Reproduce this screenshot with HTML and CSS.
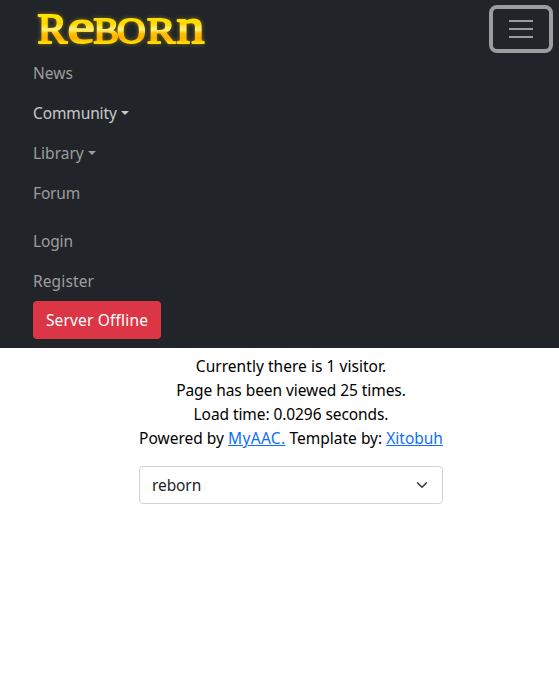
FILE: index.html
```html
<!DOCTYPE html>
<html lang="en">
<head>
<meta charset="utf-8">
<meta name="viewport" content="width=device-width, initial-scale=1">
<title>Reborn</title>
<link rel="stylesheet" href="styles.css">
</head>
<body>
<nav class="navbar">
  <div class="navbar-head">
    <a class="brand" href="#">
      <svg width="190" height="53" viewBox="28 0 190 53">
        <defs>
          <linearGradient id="gold" gradientUnits="userSpaceOnUse" x1="0" y1="-29" x2="0" y2="0">
            <stop offset="0" stop-color="#ffe600"/>
            <stop offset=".35" stop-color="#ffd800"/>
            <stop offset=".56" stop-color="#fff27a"/>
            <stop offset=".68" stop-color="#ffc400"/>
            <stop offset=".85" stop-color="#ffae00"/>
            <stop offset="1" stop-color="#ffdc00"/>
          </linearGradient>
        </defs>
        <g class="logo-text">
          <text transform="translate(37.5 42.5) scale(1.06 1)" font-size="42">R</text>
          <text transform="translate(67.5 42.5) scale(1.25 1)" font-size="49">e</text>
          <text transform="translate(93.5 42.5) scale(1.06 1)" font-size="36">B</text>
          <text transform="translate(117 42.5) scale(1.1 1)" font-size="36">O</text>
          <text transform="translate(147 42.5) scale(1.18 1)" font-size="36">R</text>
          <text transform="translate(176.5 42.5) scale(1.12 1)" font-size="50">n</text>
        </g>
      </svg>
    </a>
    <button class="toggler" aria-label="Toggle navigation">
      <svg width="30" height="30" viewBox="0 0 30 30"><path stroke="#9b9d9e" stroke-width="2" d="M3 7h24M3 15h24M3 23h24"/></svg>
    </button>
  </div>
  <ul class="nav">
    <li><a href="#">News</a></li>
    <li><a class="active caret" href="#">Community</a></li>
    <li><a class="caret" href="#">Library</a></li>
    <li><a class="forum" href="#">Forum</a></li>
  </ul>
  <ul class="nav account">
    <li><a class="login" href="#">Login</a></li>
    <li><a class="register" href="#">Register</a></li>
  </ul>
  <button class="status">Server Offline</button>
</nav>
<footer class="footer">
  <div class="visitors">Currently there is 1 visitor.</div>
  <div class="views">Page has been viewed 25 times.</div>
  <div class="load">Load time: 0.0296 seconds.</div>
  <div>Powered by <a class="aac" href="#">MyAAC.</a> Template by: <a href="#">Xitobuh</a></div>
  <div class="select"><span>reborn</span>
    <svg width="16" height="12" viewBox="0 0 16 16"><path fill="none" stroke="#343a40" stroke-linecap="round" stroke-linejoin="round" stroke-width="2" d="m2 5 6 6 6-6"/></svg>
  </div>
</footer>
</body>
</html>
```
FILE: styles.css
```css
* { box-sizing: border-box; }
body {
  margin: 0;
  background: #fff;
  color: #000;
  font: 15.5px/24px "Noto Sans", sans-serif;
}
.navbar {
  height: 348px;
  background: #212529;
}
.navbar-head {
  display: flex;
  justify-content: space-between;
  height: 53px;
  padding: 0 6px 0 28px;
}
.brand svg { display: block; overflow: visible; }
.logo-text {
  fill: url(#gold);
  stroke: url(#gold);
  stroke-width: 1.9px;
  stroke-linejoin: round;
  font-family: "Liberation Serif", serif;
  filter: drop-shadow(0 0 2px rgba(255, 200, 0, .45));
}
.toggler {
  display: flex;
  align-items: center;
  justify-content: center;
  width: 64px;
  height: 48px;
  margin-top: 5px;
  padding: 0;
  border: 4px solid #9b9d9e;
  border-radius: 8px;
  background: transparent;
}
.toggler svg { flex: none; }
.nav {
  margin: 0;
  padding: 0 33px;
  list-style: none;
}
.nav a {
  display: block;
  height: 40px;
  padding: 8px 0;
  color: #9b9d9e;
  text-decoration: none;
}
.nav a.active { color: #c8c9ca; letter-spacing: -.12px; }
.forum, .login { letter-spacing: -.15px; }
.register { letter-spacing: .12px; }
.caret::after {
  content: "";
  display: inline-block;
  margin-left: 4px;
  vertical-align: 4px;
  border: 4.5px solid transparent;
  border-top-color: currentColor;
  border-bottom: 0;
}
.account { margin-top: 8px; }
.status {
  display: block;
  width: 128px;
  height: 38px;
  margin-left: 33px;
  padding: 0;
  border: 0;
  border-radius: 4px;
  background: #dc3545;
  color: #fff;
  font: inherit;
  letter-spacing: .17px;
}
.footer {
  width: 304px;
  margin: 6px 0 0 139px;
  text-align: center;
  white-space: nowrap;
}
.footer a { color: #0d6efd; }
.visitors { letter-spacing: .04px; }
.views { letter-spacing: -.07px; }
.load { letter-spacing: -.08px; }
.footer .aac { letter-spacing: .35px; }
.select {
  display: flex;
  align-items: center;
  justify-content: space-between;
  height: 38px;
  margin-top: 16px;
  padding: 0 12px;
  border: 1px solid #ced4da;
  border-radius: 4px;
  color: #212529;
  letter-spacing: -.1px;
}
```
